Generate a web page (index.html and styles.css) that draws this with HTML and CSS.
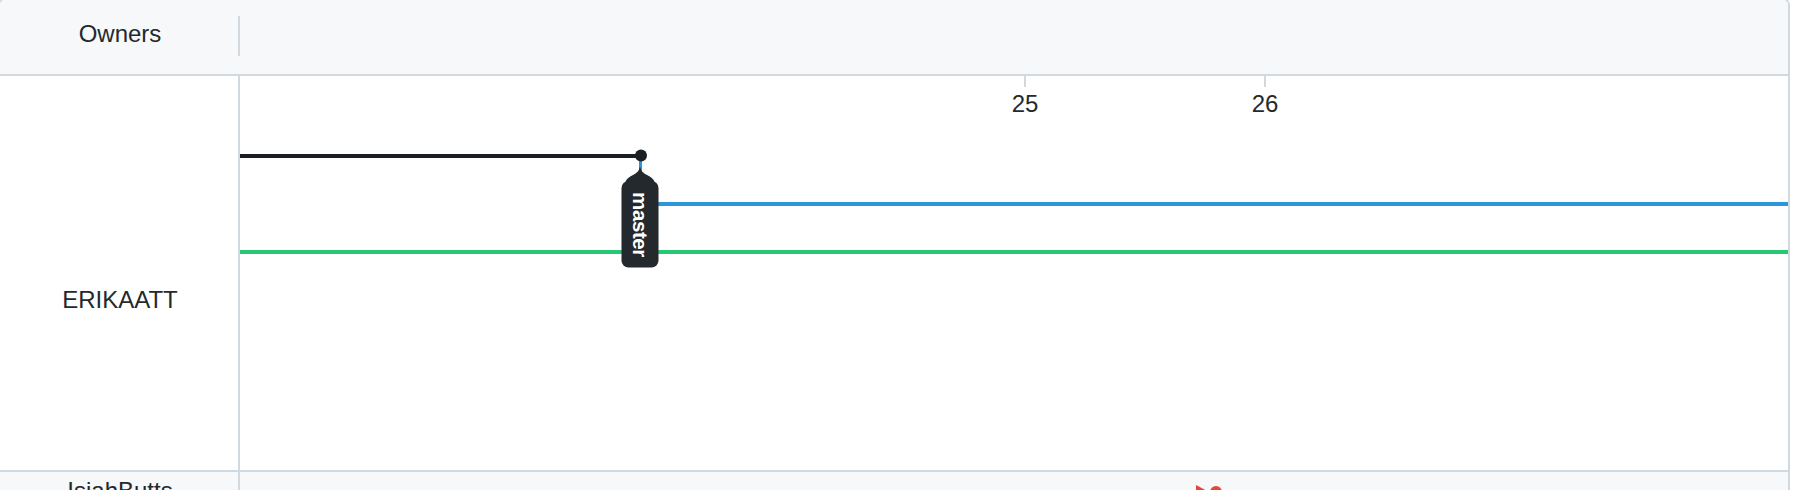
FILE: index.html
```html
<!DOCTYPE html>
<html>
<head>
<meta charset="utf-8">
<title>Network graph</title>
<link rel="stylesheet" href="styles.css">
</head>
<body>
<div class="table">
  <div class="head">
    <div class="owner-h">Owners</div>
    <div class="head-sep"></div>
    <div class="head-rest"></div>
  </div>
  <div class="row">
    <div class="owner owner-main">ERIKAATT</div>
    <div class="graph">
      <svg class="canvas" width="1548" height="394" viewBox="0 0 1548 394">
        <rect class="tick" x="784" y="-1" width="2" height="12"/>
        <rect class="tick" x="1024" y="-1" width="2" height="12"/>
        <text class="tick-label" x="785" y="36">25</text>
        <text class="tick-label" x="1025" y="36">26</text>
        <line class="l-black" x1="0" y1="80" x2="401" y2="80"/>
        <line class="l-green" x1="0" y1="176" x2="1548" y2="176"/>
        <line class="l-blue" x1="400" y1="128" x2="1548" y2="128"/>
        <line class="l-blue-v" x1="400.5" y1="80" x2="400.5" y2="96"/>
        <circle class="dot" cx="401" cy="79.5" r="6"/>
        <path class="tag" d="M400,90.5 C401,95 403,97 407,99 C411,101 414,103 414.5,106 L385.5,106 C386,103 389,101 393,99 C397,97 399,95 400,90.5 Z"/>
        <rect class="tag" x="381.5" y="105" width="37" height="86.5" rx="7"/>
        <text class="tag-label" x="0" y="0" transform="translate(392.5 148.5) rotate(90)">master</text>
      </svg>
    </div>
  </div>
  <div class="row row-alt">
    <div class="owner owner-next">IsiahButts</div>
    <div class="graph">
      <svg class="canvas" width="1548" height="394" viewBox="0 0 1548 394">
        <path class="red" d="M956,13 L956,28 L970,20.5 Z"/>
        <circle class="red" cx="976" cy="20" r="6"/>
      </svg>
    </div>
  </div>
</div>
</body>
</html>
```

FILE: styles.css
```css
html, body {
  margin: 0;
  padding: 0;
  background: #ffffff;
  overflow: hidden;
}

body {
  font-family: "Liberation Sans", Arial, sans-serif;
  font-size: 24px;
  color: #24292e;
}

.table {
  box-sizing: border-box;
  width: 1792px;
  margin: -2px 0 0 -2px;
  border: 2px solid #d1d9e0;
  border-radius: 7px;
  overflow: hidden;
}

.head {
  display: flex;
  height: 74px;
  background: #f6f8fa;
  border-bottom: 2px solid #d1d9e0;
}

.owner-h {
  box-sizing: border-box;
  width: 240px;
  height: 74px;
  padding-bottom: 6px;
  display: flex;
  align-items: center;
  justify-content: center;
}

.head-sep {
  width: 2px;
  height: 40px;
  margin-top: 16px;
  margin-left: -2px;
  background: #d1d9e0;
}

.head-rest {
  flex: 1;
}

.row {
  display: flex;
  height: 394px;
  border-bottom: 2px solid #d1d9e0;
  background: #ffffff;
}

.row-alt {
  background: #f6f8fa;
}

.owner {
  box-sizing: border-box;
  width: 240px;
  flex: none;
  border-right: 2px solid #d1d9e0;
  text-align: center;
  padding-left: 2px;
}

.owner-main {
  padding-top: 210px;
}

.owner-next {
  padding-top: 5px;
}

.graph {
  flex: 1;
  position: relative;
}

.canvas {
  display: block;
  overflow: visible;
}

.tick {
  fill: #d1d9e0;
}

.tick-label {
  font-family: "Liberation Sans", Arial, sans-serif;
  font-size: 24px;
  fill: #24292e;
  text-anchor: middle;
}

.l-black {
  stroke: #1b1f23;
  stroke-width: 4;
}

.l-green {
  stroke: #26c973;
  stroke-width: 4;
}

.l-blue {
  stroke: #2c96dd;
  stroke-width: 4;
}

.l-blue-v {
  stroke: #2c96dd;
  stroke-width: 3;
}

.dot {
  fill: #1b1f23;
}

.tag {
  fill: #24292e;
}

.tag-label {
  font-family: "Liberation Sans", Arial, sans-serif;
  font-size: 20.5px;
  font-weight: 700;
  letter-spacing: -0.4px;
  fill: #ffffff;
  text-anchor: middle;
}

.red {
  fill: #e4463a;
}
```
